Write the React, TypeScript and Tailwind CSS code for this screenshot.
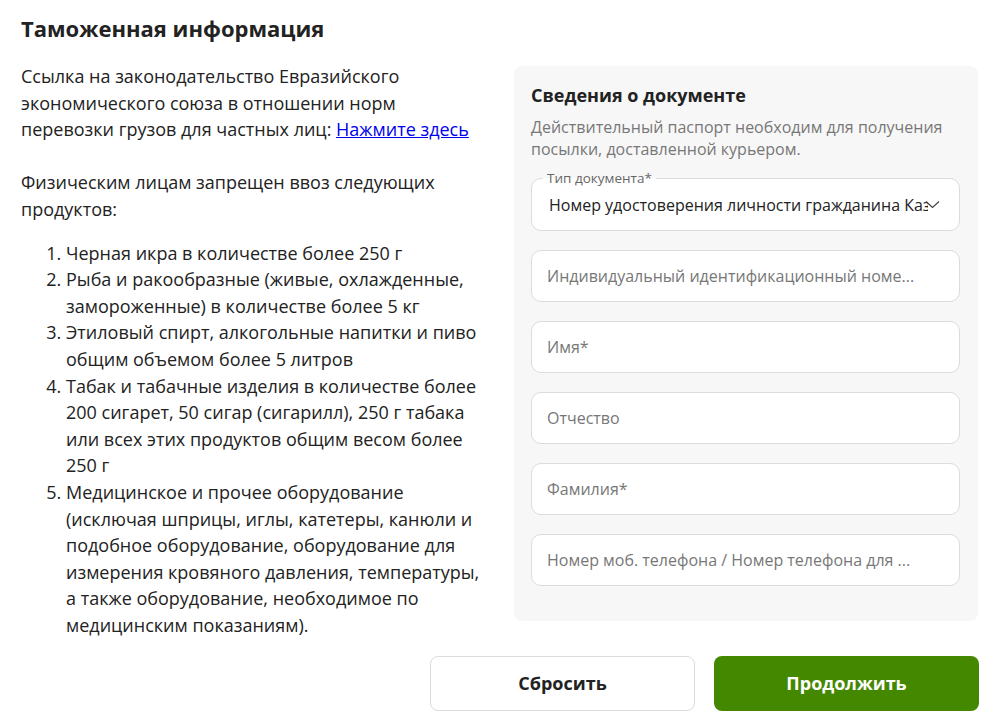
export default function App() {
  const items = [
    "Черная икра в количестве более 250 г",
    "Рыба и ракообразные (живые, охлажденные, замороженные) в количестве более 5 кг",
    "Этиловый спирт, алкогольные напитки и пиво общим объемом более 5 литров",
    "Табак и табачные изделия в количестве более 200 сигарет, 50 сигар (сигарилл), 250 г табака или всех этих продуктов общим весом более 250 г",
    "Медицинское и прочее оборудование (исключая шприцы, иглы, катетеры, канюли и подобное оборудование, оборудование для измерения кровяного давления, температуры, а также оборудование, необходимое по медицинским показаниям).",
  ];

  const fields = [
    "Индивидуальный идентификационный номе...",
    "Имя*",
    "Отчество",
    "Фамилия*",
    "Номер моб. телефона / Номер телефона для ...",
  ];

  return (
    <div
      className="min-h-screen bg-white px-[21px] pt-[13px] text-[#222]"
      style={{ fontFamily: '"Open Sans", "Noto Sans", sans-serif' }}
    >
      <h1 className="text-[22px] font-bold leading-[30px]">Таможенная информация</h1>

      <div className="mt-[20px] grid grid-cols-[470px_464px] gap-[23px]">
        {/* Left column */}
        <div className="text-[18px] leading-[26.6px]">
          <p>
            Ссылка на законодательство Евразийского экономического союза в отношении норм
            перевозки грузов для частных лиц:{" "}
            <a href="#" className="text-[#0000ee] underline">
              Нажмите здесь
            </a>
          </p>
          <p className="mt-[26.6px]">Физическим лицам запрещен ввоз следующих продуктов:</p>
          <ol className="mt-[17px] list-decimal pl-[45px]">
            {items.map((item, i) => (
              <li key={i}>{item}</li>
            ))}
          </ol>
        </div>

        {/* Right panel */}
        <div className="mt-[3px] self-start rounded-lg bg-[#f7f7f7] px-[17px] pb-[35px] pt-[16px]">
          <h2 className="text-[18px] font-bold leading-[26px]">Сведения о документе</h2>
          <p className="mt-[8px] text-[16px] leading-[22px] text-[#777]">
            Действительный паспорт необходим для получения посылки, доставленной курьером.
          </p>

          <div className="relative mt-[18px] mr-[1px] h-[53px] rounded-[10px] border border-[#dcdcdc] bg-white">
            <span className="absolute -top-[9px] left-[11px] bg-[linear-gradient(to_bottom,#f7f7f7_50%,#ffffff_50%)] px-[4px] text-[13.5px] leading-[16px] text-[#666]">
              Тип документа*
            </span>
            <div className="flex h-full items-center pl-[17px] pr-[19px]">
              <span className="min-w-0 flex-1 overflow-hidden whitespace-nowrap text-[16px] text-[#222]">
                Номер удостоверения личности гражданина Казахстана
              </span>
              <svg width="15" height="9" viewBox="0 0 15 9" fill="none" className="-ml-[3px] shrink-0">
                <path d="M1 1.5L7.5 7.5L14 1.5" stroke="#444" strokeWidth="1.2" />
              </svg>
            </div>
          </div>

          <div className="mt-[19px] flex flex-col gap-[19px]">
            {fields.map((f) => (
              <div
                key={f}
                className="mr-[1px] flex h-[52px] items-center rounded-[10px] border border-[#dcdcdc] bg-white px-[15px] text-[16px] text-[#777]"
              >
                <span className="overflow-hidden whitespace-nowrap">{f}</span>
              </div>
            ))}
          </div>
        </div>
      </div>

      <div className="mt-[18px] flex justify-end gap-[19px]">
        <button className="h-[55px] w-[265px] rounded-lg border border-[#dcdcdc] bg-white text-[18px] font-bold text-[#222]">
          Сбросить
        </button>
        <button className="h-[55px] w-[265px] rounded-lg bg-[#448800] text-[18px] font-bold text-white">
          Продолжить
        </button>
      </div>
    </div>
  );
}
